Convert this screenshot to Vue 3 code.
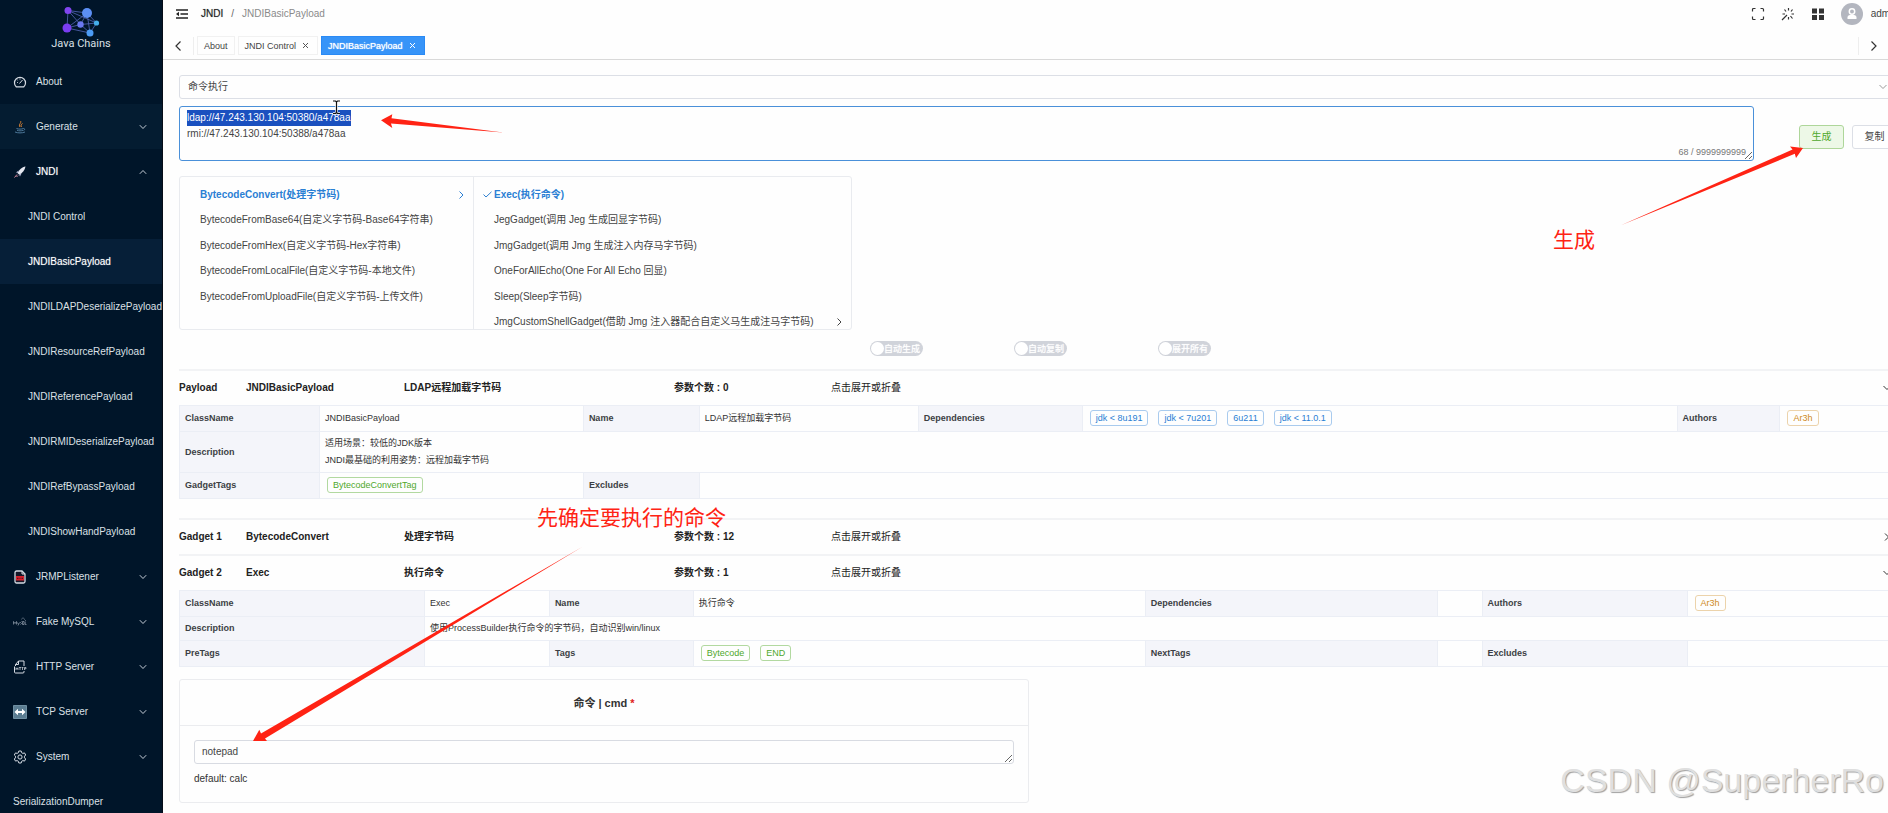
<script setup>
import { ref, onMounted } from 'vue'

const menu = [
  { label: 'About', icon: 'gauge' },
  { label: 'Generate', icon: 'java', arrow: 'down', hover: true },
  { label: 'JNDI', icon: 'rocket', arrow: 'up', open: true },
  { label: 'JNDI Control', sub: true },
  { label: 'JNDIBasicPayload', sub: true, hover: true, open: true },
  { label: 'JNDILDAPDeserializePayload', sub: true },
  { label: 'JNDIResourceRefPayload', sub: true },
  { label: 'JNDIReferencePayload', sub: true },
  { label: 'JNDIRMIDeserializePayload', sub: true },
  { label: 'JNDIRefBypassPayload', sub: true },
  { label: 'JNDIShowHandPayload', sub: true },
  { label: 'JRMPListener', icon: 'file', arrow: 'down' },
  { label: 'Fake MySQL', icon: 'mysql', arrow: 'down' },
  { label: 'HTTP Server', icon: 'http', arrow: 'down' },
  { label: 'TCP Server', icon: 'tcp', arrow: 'down' },
  { label: 'System', icon: 'gear', arrow: 'down' },
  { label: 'SerializationDumper' }
]

const leftNodes = [
  { label: 'BytecodeConvert(处理字节码)', active: true, arrow: true },
  { label: 'BytecodeFromBase64(自定义字节码-Base64字符串)' },
  { label: 'BytecodeFromHex(自定义字节码-Hex字符串)' },
  { label: 'BytecodeFromLocalFile(自定义字节码-本地文件)' },
  { label: 'BytecodeFromUploadFile(自定义字节码-上传文件)' }
]
const rightNodes = [
  { label: 'Exec(执行命令)', active: true, checked: true },
  { label: 'JegGadget(调用 Jeg 生成回显字节码)' },
  { label: 'JmgGadget(调用 Jmg 生成注入内存马字节码)' },
  { label: 'OneForAllEcho(One For All Echo 回显)' },
  { label: 'Sleep(Sleep字节码)' },
  { label: 'JmgCustomShellGadget(借助 Jmg 注入器配合自定义马生成注马字节码)', arrow: true }
]
const switches = ['自动生成', '自动复制', '展开所有']

const sections = [
  {
    kind: 'Payload', name: 'JNDIBasicPayload', title: 'LDAP远程加载字节码', count: 0, open: true,
    cols: [140, 264, 116, 219, 164, 595, 103, 117],
    rows: [
      [{ th: 'ClassName' }, { text: 'JNDIBasicPayload' }, { th: 'Name' }, { text: 'LDAP远程加载字节码' },
        { th: 'Dependencies' }, { tags: ['jdk < 8u191', 'jdk < 7u201', '6u211', 'jdk < 11.0.1'], tone: 'blue' },
        { th: 'Authors' }, { tags: ['Ar3h'], tone: 'orange' }],
      [{ th: 'Description' }, { text: '适用场景：较低的JDK版本\nJNDI最基础的利用姿势：远程加载字节码', span: 7 }],
      [{ th: 'GadgetTags' }, { tags: ['BytecodeConvertTag'], tone: 'green' }, { th: 'Excludes' }, { text: '', span: 5 }]
    ]
  },
  { kind: 'Gadget 1', name: 'BytecodeConvert', title: '处理字节码', count: 12, open: false },
  {
    kind: 'Gadget 2', name: 'Exec', title: '执行命令', count: 1, open: true,
    cols: [245, 125, 144, 452, 292, 45, 205, 210],
    rows: [
      [{ th: 'ClassName' }, { text: 'Exec' }, { th: 'Name' }, { text: '执行命令' }, { th: 'Dependencies' }, { text: '' },
        { th: 'Authors' }, { tags: ['Ar3h'], tone: 'orange' }],
      [{ th: 'Description' }, { text: '使用ProcessBuilder执行命令的字节码，自动识别win/linux', span: 7 }],
      [{ th: 'PreTags' }, { text: '' }, { th: 'Tags' }, { tags: ['Bytecode', 'END'], tone: 'green' }, { th: 'NextTags' },
        { text: '' }, { th: 'Excludes' }, { text: '' }]
    ]
  }
]
const share = (cols, w) => (w / cols.reduce((a, b) => a + b, 0)) * 100 + '%'

const output = ref('ldap://47.243.130.104:50380/a478aa\nrmi://47.243.130.104:50388/a478aa')
const cmd = ref('notepad')
const outputBox = ref(null)
onMounted(() => {
  outputBox.value.focus()
  outputBox.value.setSelectionRange(0, output.value.indexOf('\n'))
})
</script>

<template>
  <div class="shell">
    <aside class="side">
      <a class="brand" href="#">
        <svg width="40" height="34" viewBox="0 0 40 34" aria-hidden="true">
          <path d="M7 6.500 26 9M7 6.500 6 24M7 6.500 19.500 20.500M7 6.500 35.500 19M26 9 6 24M26 9 19.500 20.500M26 9 35.500 19M26 9 29 29M6 24 19.500 20.500M6 24 29 29M19.500 20.500 35.500 19M19.500 20.500 29 29M35.500 19 29 29" stroke="#5466b8" stroke-width=".8" fill="none" />
          <circle cx="7" cy="6.500" r="3.500" fill="#8145f0" /><circle cx="26" cy="9" r="5" fill="#5c8ff5" />
          <circle cx="6" cy="24" r="4.500" fill="#7a3df2" /><circle cx="19.500" cy="20.500" r="3.200" fill="#6a78f0" />
          <circle cx="35.500" cy="19" r="2.600" fill="#45aeea" /><circle cx="29" cy="29" r="3.500" fill="#4c9cf5" />
        </svg>
        <span>Java Chains</span>
      </a>
      <nav>
        <a v-for="m in menu" :key="m.label" href="#" class="item" :class="{ sub: m.sub, hover: m.hover, open: m.open }">
          <svg v-if="m.icon" class="ico" width="14" height="14" viewBox="0 0 14 14" fill="none" stroke="#d5dbe3" aria-hidden="true">
            <template v-if="m.icon === 'gauge'">
              <path d="M3.200 11.800a5.500 5.500 0 1 1 7.600 0z" stroke-linejoin="round" stroke-width="1.200" />
              <path d="M6.500 8.500 9.500 5M4 7.500h.8M7 3.500v1M4.500 5l.6.500" />
            </template>
            <template v-else-if="m.icon === 'java'">
              <path d="M7.500 1c1.500 2-2.500 3-.5 6M9.500 3.500C8 4.500 7.500 5.500 8.500 7" stroke="#d98231" />
              <path d="M3.500 8.500c2 .8 5 .8 7 0M4 10.300c2 .7 4 .7 6 0M2 12c3 1.200 7 1.200 10 0M10.500 8.500c1.500 0 1.500 1.500 0 2" stroke="#5480a3" stroke-width=".9" />
            </template>
            <template v-else-if="m.icon === 'rocket'">
              <path d="M12.500 1.500C9 2 6 5 4.500 8l1.800 1.800C9.500 8 12 5 12.500 1.500z" fill="#e4e7f0" stroke="none" />
              <path d="M5.500 5.500 3 7.500l2 .5M8.500 8.500 7 11.500 6 9.500" fill="#a9b0cf" stroke="none" />
              <path d="M4 9.500 1.500 12.500M5 10.500 3.500 12" stroke="#d58ba0" />
            </template>
            <template v-else-if="m.icon === 'file'">
              <path d="M2 2.500A1.500 1.500 0 0 1 3.500 1H9l3 3v7.500a1.500 1.500 0 0 1-1.500 1.500h-7A1.500 1.500 0 0 1 2 11.500z" fill="#151729" stroke-width="1.300" />
              <path d="M3 6h8v4.500H3z" fill="#d6202c" stroke="none" /><path d="M4 8.300h1.500M6.500 8.300h1M8.500 8.300H10" stroke="#4c0a18" />
              <path d="M9 1v3h3" />
            </template>
            <template v-else-if="m.icon === 'mysql'">
              <path d="M.5 9.500v-3l1.500 2 1.500-2v3M4.500 7.500 5.200 9M6.500 7.500 5 10.500M8.500 6.500 7.500 7.500l1 1-1 1M9.500 6.500h1.500v3H9.500zM12.200 6.500v3h1.300" stroke="#98a5b3" stroke-width=".7" />
              <path d="M8.500 4.500C9 2.500 11 2.500 11.500 4.500l1.500 1.500" stroke="#71808f" stroke-width=".7" />
            </template>
            <template v-else-if="m.icon === 'http'">
              <path d="M2.500 6V4.500L5.500 1H11v5M5.500 1v3.500h-3M1.500 6.500v5.500a1 1 0 0 0 1 1H10a1 1 0 0 0 1-1v-1" />
              <path d="M3 7.500v2.500M5 7.500v2.500M3 8.700h2M6 7.500h2M7 7.500v2.500M8.500 7.500h2M9.500 7.500v2.500M11.500 10V7.500H13v1.300h-1.500" stroke-width=".7" />
            </template>
            <template v-else-if="m.icon === 'tcp'">
              <path d="M.5.500h13v13H.5z" fill="#5b7d92" stroke="#6f8fa2" /><path d="M1.500 7 5 3.800v2.200h4V3.800L12.500 7 9 10.200V8H5v2.200z" fill="#fff" stroke="none" />
            </template>
            <template v-else>
              <path d="M5.800 1h2.400l.4 1.700 1.300.7 1.600-.5 1.200 2.100-1.200 1.200v1.600l1.200 1.200-1.200 2.100-1.600-.5-1.300.7L8.200 13H5.800l-.4-1.700-1.300-.7-1.600.5L1.300 9l1.200-1.200V6.200L1.300 5l1.200-2.100 1.600.5 1.300-.7z" stroke-linejoin="round" /><circle cx="7" cy="7" r="2.100" />
            </template>
          </svg>
          <span class="label">{{ m.label }}</span>
          <svg v-if="m.arrow" class="fold" :class="m.arrow" width="8" height="6" viewBox="0 0 8 6" aria-hidden="true"><path d="M.8 1.200 4 4.500 7.200 1.200" fill="none" stroke="#c4ccd5" /></svg>
        </a>
      </nav>
    </aside>

    <main class="main">
      <header class="top">
        <button class="plain" aria-label="Collapse menu">
          <svg width="12" height="12" viewBox="0 0 12 12"><path d="M0 2h12M4.500 6H12M0 10h12" stroke="#222" stroke-width="1.500" /><path d="M0 6l3-2.200v4.400z" fill="#222" /></svg>
        </button>
        <nav class="crumbs"><a href="#">JNDI</a><i>/</i><span>JNDIBasicPayload</span></nav>
        <div class="tools">
          <button class="plain" aria-label="Fullscreen"><svg width="14" height="14" viewBox="0 0 14 14"><path d="M1.500 4.500v-2a1 1 0 0 1 1-1h2M9.500 1.500h2a1 1 0 0 1 1 1v2M12.500 9.500v2a1 1 0 0 1-1 1h-2M4.500 12.500h-2a1 1 0 0 1-1-1v-2" fill="none" stroke="#333" stroke-width="1.200" /></svg></button>
          <button class="plain" aria-label="Theme"><svg width="14" height="14" viewBox="0 0 14 14"><path d="M1 13l5-5M7.500 1v2.500M3.500 2.500 5 4.500M11.500 2.500 10 4.500M1.500 7H4M10.500 7H13M9.500 9l2 2.500M7.500 10v2.500" fill="none" stroke="#333" stroke-width="1.200" /></svg></button>
          <button class="plain" aria-label="Apps"><svg width="14" height="14" viewBox="0 0 14 14" fill="#333"><path d="M1 1.500h5v5H1zM8 1.500h5v5H8zM1 8h5v5H1zM8 8h5v5H8z" /></svg></button>
          <a class="user" href="#">
            <svg width="22" height="22" viewBox="0 0 22 22" aria-hidden="true"><circle cx="11" cy="11" r="11" fill="#b3b6bf" /><circle cx="11" cy="8.500" r="2.700" fill="none" stroke="#fff" stroke-width="1.500" /><path d="M6.500 16v-1.500c0-1.500 1-2.500 2.500-2.500h4c1.500 0 2.500 1 2.500 2.500V16z" fill="#fff" /></svg>
            <span>admin</span>
          </a>
        </div>
      </header>

      <div class="tabs">
        <button class="plain edge left" aria-label="Scroll left"><svg width="6" height="10" viewBox="0 0 6 10"><path d="M5.500.5 1 5l4.500 4.500" fill="none" stroke="#333" stroke-width="1.200" /></svg></button>
        <a href="#" class="tab">About</a>
        <a href="#" class="tab">JNDI Control<svg width="7" height="7" viewBox="0 0 7 7"><path d="M1 1l5 5M6 1 1 6" stroke="#555" /></svg></a>
        <a href="#" class="tab on">JNDIBasicPayload<svg width="7" height="7" viewBox="0 0 7 7"><path d="M1 1l5 5M6 1 1 6" stroke="#fff" /></svg></a>
        <button class="plain edge right" aria-label="Scroll right"><svg width="6" height="10" viewBox="0 0 6 10"><path d="M.5.500 5 5 .5 9.500" fill="none" stroke="#333" stroke-width="1.200" /></svg></button>
      </div>

      <div class="page">
        <div class="picker">
          <select aria-label="Payload type"><option>命令执行</option></select>
          <svg width="8" height="6" viewBox="0 0 8 6" aria-hidden="true"><path d="M.5 1 4 4.500 7.500 1" fill="none" stroke="#999" /></svg>
        </div>

        <div class="result">
          <div class="output">
            <textarea ref="outputBox" v-model="output" aria-label="Result" spellcheck="false"></textarea>
            <span class="counter">68 / 9999999999</span>
          </div>
          <div class="actions">
            <button class="btn go">生成</button>
            <button class="btn">复制</button>
          </div>
        </div>

        <div class="cascader">
          <ul v-for="(list, i) in [leftNodes, rightNodes]" :key="i" :class="i ? 'second' : 'first'">
            <li v-for="n in list" :key="n.label" :class="{ active: n.active }">
              <svg v-if="n.checked" class="check" width="9" height="7" viewBox="0 0 9 7"><path d="M.5 3.500 3 6 8.500.8" fill="none" stroke="#2f80d0" /></svg>
              <span>{{ n.label }}</span>
              <svg v-if="n.arrow" class="more" width="5" height="8" viewBox="0 0 5 8"><path d="M.5.500 4 4 .5 7.500" fill="none" stroke="currentColor" /></svg>
            </li>
          </ul>
        </div>

        <div class="switches">
          <label v-for="s in switches" :key="s"><input type="checkbox" role="switch" /><span>{{ s }}</span></label>
        </div>

        <section v-for="s in sections" :key="s.kind" class="block">
          <button class="head" :aria-expanded="s.open">
            <b>{{ s.kind }}</b><b>{{ s.name }}</b><b>{{ s.title }}</b><b>参数个数 : {{ s.count }}</b><span>点击展开或折叠</span>
            <svg width="8" height="8" viewBox="0 0 8 8" aria-hidden="true"><path :d="s.open ? 'M.5 2 4 5.500 7.500 2' : 'M2 .5 5.500 4 2 7.500'" fill="none" stroke="#333" /></svg>
          </button>
          <table v-if="s.open">
            <colgroup><col v-for="(w, i) in s.cols" :key="i" :style="{ width: share(s.cols, w) }" /></colgroup>
            <tbody>
              <tr v-for="(r, ri) in s.rows" :key="ri">
                <template v-for="(c, ci) in r" :key="ci">
                  <th v-if="c.th" scope="row">{{ c.th }}</th>
                  <td v-else :colspan="c.span || 1">
                    <div v-if="c.tags" class="tags"><span v-for="t in c.tags" :key="t" class="tag" :class="c.tone">{{ t }}</span></div>
                    <template v-else>{{ c.text }}</template>
                  </td>
                </template>
              </tr>
            </tbody>
          </table>
        </section>

        <div class="card">
          <label class="card-head" for="cmd">命令 | cmd <em>*</em></label>
          <div class="card-body">
            <textarea id="cmd" v-model="cmd" rows="1" spellcheck="false"></textarea>
            <p>default: calc</p>
          </div>
        </div>
      </div>
    </main>

    <svg class="marks" width="1888" height="813" viewBox="0 0 1888 813" aria-hidden="true">
      <g fill="#ff2314">
        <path d="M381 120.300 392.300 114.300 391.500 118.300 503 132.500 391 123.500 392.300 128z" />
        <path d="M1803 148 1796 158 1794.800 153.800 1621 225.300 1792.500 149.500 1790 146.500z" />
        <path d="M253 741 259.300 729.700 261 733.500 582.500 546.700 265 738.500 267 741z" />
      </g>
      <path d="M333 101h2.500l1 1 1-1h2.500M336.500 102v10M333 113.500h2.500l1-1 1 1h2.500" fill="none" stroke="#fff" stroke-width="3" opacity=".7" />
      <path d="M333 101h2.500l1 1 1-1h2.500M336.500 102v10M333 113.500h2.500l1-1 1 1h2.500" fill="none" stroke="#111" stroke-width="1.200" />
    </svg>
    <span class="note go-note">生成</span>
    <span class="note cmd-note">先确定要执行的命令</span>
    <span class="watermark">CSDN @SuperherRo</span>
  </div>
</template>

<style>
body { margin: 0; background: #fefefe; }
</style>

<style scoped>
* { box-sizing: border-box; }
.shell { position: relative; display: flex; height: 100vh; overflow: hidden; font: 10px/16px "Liberation Sans", "Noto Sans CJK SC", sans-serif; color: #444; }
a { color: inherit; text-decoration: none; }
button, select, textarea { font: inherit; color: inherit; }
.plain { border: 0; padding: 0; background: none; display: flex; align-items: center; justify-content: center; }

.side { flex: 0 0 163px; height: 100%; overflow: hidden; background: #001529; border-right: 1px solid #060d18; color: #dbe0e6; }
.brand { display: flex; flex-direction: column; align-items: center; height: 59px; padding-top: 4px; font: 11px/11px Roboto, sans-serif; }
.item { display: flex; align-items: center; height: 45px; padding-left: 13px; white-space: nowrap; }
.item.sub { padding-left: 28px; }
.item.hover { background: #041c31; }
.item.sub.hover { background: #061f38; }
.item.open { color: #fff; }
.open .label { text-shadow: 0 0 1px #ffffff80; }
.ico { flex: none; margin-right: 9px; }
.fold { margin-left: auto; margin-right: 15px; }
.fold.up { rotate: 180deg; }

.main { flex: 0 0 calc(100% - 138px); display: flex; flex-direction: column; }
.top { display: flex; align-items: center; height: 28px; padding: 0 15px 0 13px; }
.crumbs { display: flex; margin-left: 13px; color: #8a8a8a; }
.crumbs a { color: #222; text-shadow: 0 0 1px #999; }
.crumbs i { margin: 0 8px; font-style: normal; color: #666; }
.tools { display: flex; align-items: center; gap: 16px; margin-left: auto; }
.user { display: flex; align-items: center; gap: 8px; }
.tabs { display: flex; align-items: center; gap: 3px; height: 32px; padding-top: 4px; border-bottom: 1px solid #d9d9d9; margin-bottom: 15px; font-size: 9px; }
.tab { display: flex; align-items: center; gap: 6px; height: 19px; padding: 0 6px; border: 1px solid #f1f1f1; }
.tab svg { margin-right: 2px; }
.tab.on { background: #3794f8; border-color: #2a8af5; color: #fff; text-shadow: 0 0 1px #fff; }
.edge { width: 31px; height: 18px; }
.edge.left { border-right: 1px solid #eee; }
.edge.right { margin-left: auto; margin-right: 24px; border-left: 1px solid #eee; }

.page { padding: 0 16px; }
.picker { display: flex; align-items: center; height: 24px; border: 1px solid #dcdfe6; border-radius: 3px; padding-right: 9px; }
.picker select { flex: 1; height: 22px; padding: 0 8px; border: 0; outline: 0; background: none; appearance: none; }
.result { display: flex; align-items: center; margin-top: 7px; }
.output { position: relative; flex: 0 0 calc(100% - 143px); margin-right: 45px; height: 55px; }
.output textarea { display: block; width: 100%; height: 55px; padding: 3px 7px; border: 1px solid #4a90d9; border-radius: 3px; outline: 0; background: none; line-height: 16px; resize: both; }
.output textarea::selection { background: #1a50bf; color: #fff; }
.counter { position: absolute; right: 8px; bottom: 2px; font-size: 9px; line-height: 14px; color: #777; }
.actions { display: flex; gap: 8px; padding-top: 7px; }
.btn { width: 45px; height: 24px; padding: 0; border: 1px solid #dcdfe6; border-radius: 3px; background: #fff; }
.btn.go { color: #4fa82c; background: #edf8e7; border-color: #aed69a; }

.cascader { display: flex; width: 673px; max-width: 100%; height: 154px; margin-top: 15px; border: 1px solid #e9ebef; border-radius: 3px; overflow: hidden; }
.cascader ul { display: grid; grid-template-rows: repeat(6, 1fr); flex-shrink: 0; height: 158px; margin: 0; padding: 5px 0 0; list-style: none; white-space: nowrap; }
.cascader .first { flex: 0 0 294px; border-right: 1px solid #e9ebef; }
.cascader .second { flex: 1; }
.cascader li { display: flex; align-items: center; position: relative; padding: 0 9px 0 20px; }
.cascader li.active { color: #2a7fd4; font-weight: 700; }
.check { position: absolute; left: 9px; }
.more { margin-left: auto; }

.switches { display: flex; gap: 91px; padding: 11px 0 13px 691px; }
.switches label { display: flex; align-items: center; width: 53px; height: 15px; padding: 1px; border-radius: 8px; background: #d0d3da; color: #fff; font-size: 9px; }
.switches input { flex: none; width: 13px; height: 13px; margin: 0; border-radius: 50%; background: #fff; appearance: none; }
.switches span { white-space: nowrap; text-shadow: 0 0 1px #fff; }

.head { display: grid; grid-template-columns: 67px 158px 270px 157px 1fr 14px; align-items: center; width: 100%; height: 36px; padding: 0; border: 0; border-top: 2px solid #f2f3f5; background: none; text-align: left; font-size: 10px; color: #222; }
.block:nth-of-type(1) { padding-bottom: 19px; }
table { width: 100%; border-collapse: collapse; table-layout: fixed; font-size: 9px; line-height: 17px; color: #333; }
th, td { height: 26px; padding: 3px 5px; border: 1px solid #ebeef5; border-width: 1px 0; text-align: left; font-weight: 400; white-space: pre-line; }
tr:nth-child(2) > * { height: 24px; }
th { background: #f4f5fa; font-weight: 700; color: #3c3f44; border: 1px solid #ebeef5; }
.tags { display: flex; gap: 10px; margin-left: 2px; padding-bottom: 2px; }
.tag { padding: 0 5px; border: 1px solid; border-radius: 3px; line-height: 14px; white-space: nowrap; }
.blue { color: #2a7fd4; border-color: #a9cbee; }
.green { color: #4fa82c; border-color: #b2d9a0; }
.orange { color: #cf8a24; border-color: #ecd3ab; }

.card { width: calc(50% - 9px); height: 124px; margin-top: 12px; border: 1px solid #ebecef; border-radius: 3px; }
.card-head { display: block; height: 46px; line-height: 46px; border-bottom: 1px solid #ebecef; text-align: center; font-size: 11px; font-weight: 700; color: #333; }
.card-head em { color: #e02020; font-style: normal; }
.card-body { padding: 14px; }
.card-body textarea { display: block; width: 100%; height: 24px; padding: 3px 7px; border: 1px solid #d8dbe2; border-radius: 3px; outline: 0; background: none; resize: both; overflow: hidden; }
.card-body p { margin: 7px 0 0; font-size: 10px; color: #333; }

.marks { position: absolute; left: 0; top: 0; pointer-events: none; }
.note { position: absolute; font: 21px/24px "Noto Sans CJK SC", sans-serif; color: #ff2314; white-space: nowrap; }
.go-note { left: 1553px; top: 226px; }
.cmd-note { left: 537px; top: 504px; }
.watermark { position: absolute; right: 4px; bottom: 13px; font-size: 34px; line-height: 40px; color: #dfdfdf; text-shadow: 1px 1px 1px #a0a0a0; white-space: nowrap; }
</style>
